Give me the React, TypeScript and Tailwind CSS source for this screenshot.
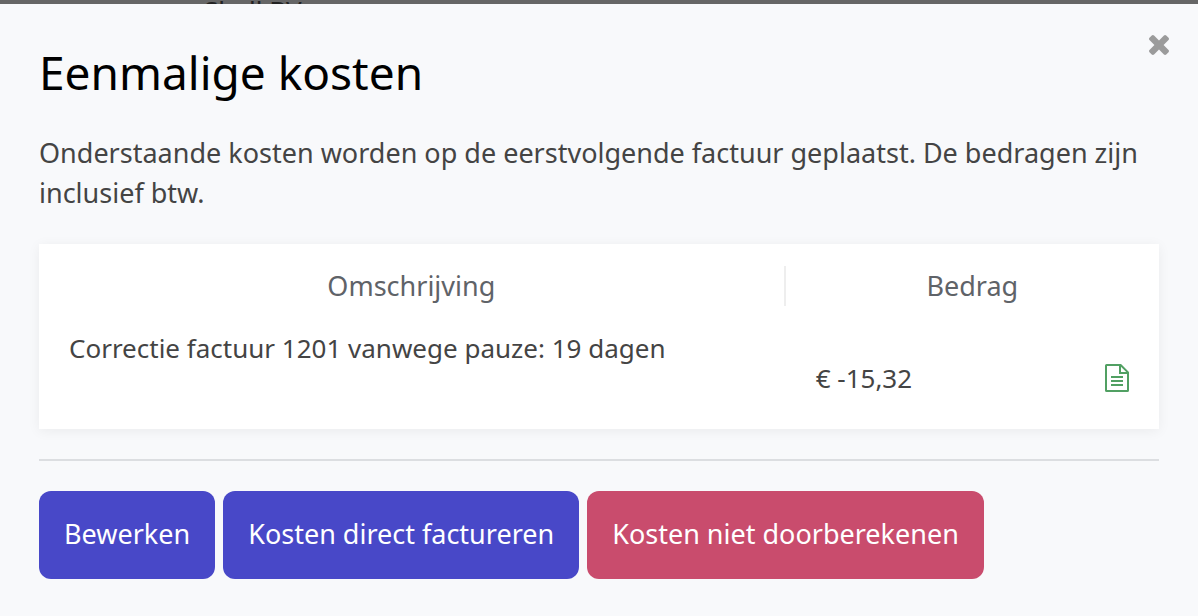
import type { ReactNode } from 'react'
import clsx from 'clsx'

interface CostLine {
  id: number
  description: string
  amount: string
}

const costLines: CostLine[] = [
  { id: 1, description: 'Correctie factuur 1201 vanwege pauze: 19 dagen', amount: '€ -15,32' },
]

function CloseIcon() {
  return (
    <svg viewBox="302 366 1188 1188" className="size-5" fill="currentColor" aria-hidden="true">
      <path d="M1490 1322q0 40-28 68l-136 136q-28 28-68 28t-68-28l-294-294-294 294q-28 28-68 28t-68-28l-136-136q-28-28-28-68t28-68l294-294-294-294q-28-28-28-68t28-68l136-136q28-28 68-28t68 28l294 294 294-294q28-28 68-28t68 28l136 136q28 28 28 68t-28 68l-294 294 294 294q28 28 28 68z" />
    </svg>
  )
}

function InvoiceIcon() {
  return (
    <svg viewBox="0 0 24 28" className="h-7 w-6" fill="none" stroke="currentColor" strokeWidth="2" aria-hidden="true">
      <path d="M1.6 1H15.6L23 8.4V26.4Q23 27 22.4 27H1.6Q1 27 1 26.4V1.6Q1 1 1.6 1Z" strokeLinejoin="round" />
      <path d="M15 1V9H23" />
      <path d="M6 13H18M6 17H18M6 21H18" />
    </svg>
  )
}

interface ActionButtonProps {
  variant?: 'primary' | 'danger'
  children: ReactNode
}

function ActionButton({ variant = 'primary', children }: ActionButtonProps) {
  return (
    <button
      type="button"
      className={clsx(
        'cursor-pointer rounded-xl px-[25px] pt-[23px] pb-[25px] leading-10 text-white',
        variant === 'primary' ? 'bg-[#4848c8] hover:bg-[#3d3db5]' : 'bg-[#c94c6d] hover:bg-[#b5415f]'
      )}
    >
      {children}
    </button>
  )
}

export default function App() {
  return (
    <div className="min-h-screen bg-[#666666] font-['Noto_Sans',sans-serif] text-[27px] text-[#444444]">
      {/* Page behind the dialog, only a sliver stays visible */}
      <div className="h-1 overflow-hidden pl-51 text-[26px] leading-5 text-[#222222]">Shell BV</div>

      <div role="dialog" aria-labelledby="dialog-title" className="relative min-h-[calc(100vh-4px)] bg-[#f8f9fb] px-[39px] pt-[38px] pb-9">
        <button
          type="button"
          aria-label="Sluiten"
          className="absolute top-[31px] right-[29px] cursor-pointer text-[#9b9b9b] hover:text-[#666666]"
        >
          <CloseIcon />
        </button>

        <h1 id="dialog-title" className="text-[46px] leading-[60px] text-black">
          Eenmalige kosten
        </h1>
        <p className="mt-[31px] leading-10">
          Onderstaande kosten worden op de eerstvolgende factuur geplaatst. De bedragen zijn inclusief btw.
        </p>

        <div className="mt-[31px] bg-white pt-[22px] shadow-[0_2px_12px_rgba(0,0,0,0.06)]">
          <table className="w-full table-fixed border-separate border-spacing-0 leading-10">
            <thead className="text-[#5f6368]">
              <tr>
                <th className="w-2/3 border-r-2 border-[#eeeeee] p-0 font-normal">Omschrijving</th>
                <th className="p-0 font-normal">Bedrag</th>
              </tr>
            </thead>
            <tbody className="text-[26px]">
              {costLines.map((line) => (
                <tr key={line.id}>
                  <td className="px-[30px] pt-[22px] align-top">{line.description}</td>
                  <td className="px-[30px] pt-[52px] pb-[31px]">
                    <div className="flex items-center justify-between">
                      <span>{line.amount}</span>
                      <a href="#factuur" aria-label="Factuur bekijken" className="text-[#51a063]">
                        <InvoiceIcon />
                      </a>
                    </div>
                  </td>
                </tr>
              ))}
            </tbody>
          </table>
        </div>

        <hr className="my-[30px] border-t-2 border-[#dcdee1]" />

        <div className="flex flex-wrap gap-2">
          <ActionButton>Bewerken</ActionButton>
          <ActionButton>Kosten direct factureren</ActionButton>
          <ActionButton variant="danger">Kosten niet doorberekenen</ActionButton>
        </div>
      </div>
    </div>
  )
}
